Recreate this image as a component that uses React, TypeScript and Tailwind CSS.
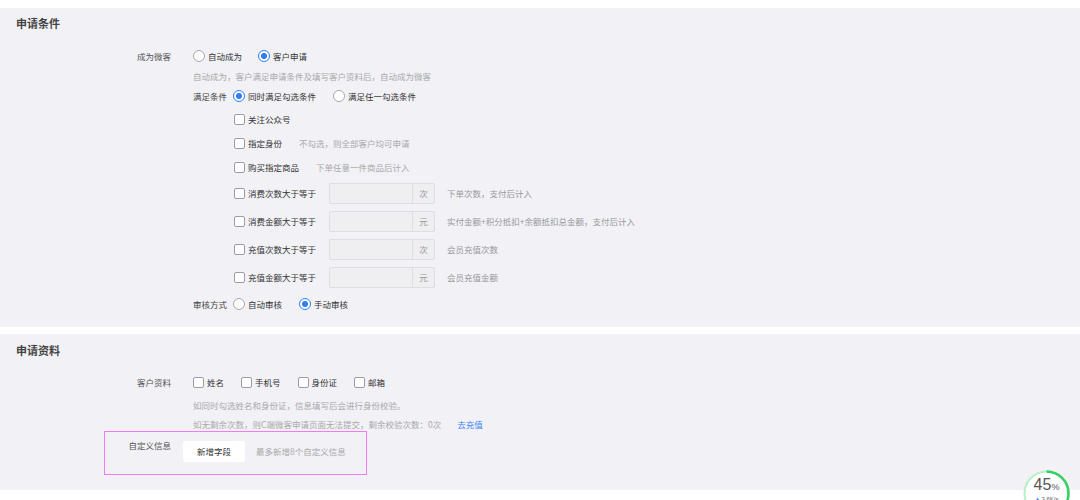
import React from "react";

const F = { fontFamily: '"Noto Sans CJK SC", "Noto Sans", sans-serif' };

function Radio({ checked, label, className = "" }: { checked?: boolean; label: string; className?: string }) {
  return (
    <div className={"flex items-center " + className}>
      {checked ? (
        <span className="w-[12px] h-[12px] rounded-full border border-[#2e7ef6] bg-white flex items-center justify-center">
          <span className="w-[6px] h-[6px] rounded-full bg-[#2e7ef6]" />
        </span>
      ) : (
        <span className="w-[12px] h-[12px] rounded-full border border-[#a9a9b0] bg-white" />
      )}
      <span className="ml-[3px] text-[8.5px] text-[#333]">{label}</span>
    </div>
  );
}

function Box() {
  return <span className="w-[11px] h-[11px] rounded-[2px] border border-[#9c9ca6] bg-white shrink-0" />;
}

function Check({ label, className = "" }: { label: string; className?: string }) {
  return (
    <div className={"flex items-center " + className}>
      <Box />
      <span className="ml-[3px] text-[8.5px] text-[#333]">{label}</span>
    </div>
  );
}

function InputRow({ label, unit, hint }: { label: string; unit: string; hint: string }) {
  return (
    <div className="h-[28px] flex items-center ml-[234px]">
      <div className="w-[95px] flex items-center">
        <Box />
        <span className="ml-[3px] text-[8.5px] text-[#333]">{label}</span>
      </div>
      <div className="w-[106px] h-[21px] flex border border-[#dedee2] rounded-[2px] bg-[#efeff1]">
        <div className="flex-1" />
        <div className="w-[22px] border-l border-[#dedee2] flex items-center justify-center text-[8.5px] text-[#999]">
          {unit}
        </div>
      </div>
      <span className="ml-[12px] text-[8.5px] text-[#999]">{hint}</span>
    </div>
  );
}

export default function App() {
  return (
    <div className="w-[1080px] h-[500px] bg-white overflow-hidden relative" style={F}>
      <div className="h-[8px] bg-white" />
      {/* Panel 1 */}
      <div className="h-[319px] bg-[#f1f1f6]">
        <div className="h-[30px] flex items-center pl-[16px] text-[11px] font-bold text-[#444]">申请条件</div>
        <div className="h-[8px]" />
        <div className="h-[20px] flex items-center">
          <div className="w-[171px] text-right text-[8.5px] text-[#555]">成为微客</div>
          <Radio label="自动成为" className="ml-[22px]" />
          <Radio checked label="客户申请" className="ml-[16px]" />
        </div>
        <div className="h-[20px] flex items-center pl-[193px] text-[8.5px] text-[#aaa]">
          自动成为，客户满足申请条件及填写客户资料后，自动成为微客
        </div>
        <div className="h-[20px] flex items-center pl-[193px]">
          <span className="text-[8.5px] text-[#444]">满足条件</span>
          <Radio checked label="同时满足勾选条件" className="ml-[6px]" />
          <Radio label="满足任一勾选条件" className="ml-[17px]" />
        </div>
        <div className="h-[1px]" />
        <div className="h-[24px] flex items-center ml-[234px]">
          <Check label="关注公众号" />
        </div>
        <div className="h-[24px] flex items-center ml-[234px]">
          <Check label="指定身份" />
          <span className="ml-[17px] text-[8.5px] text-[#aaa]">不勾选，则全部客户均可申请</span>
        </div>
        <div className="h-[24px] flex items-center ml-[234px]">
          <Check label="购买指定商品" />
          <span className="ml-[17px] text-[8.5px] text-[#aaa]">下单任意一件商品后计入</span>
        </div>
        <InputRow label="消费次数大于等于" unit="次" hint="下单次数，支付后计入" />
        <InputRow label="消费金额大于等于" unit="元" hint="实付金额+积分抵扣+余额抵扣总金额，支付后计入" />
        <InputRow label="充值次数大于等于" unit="次" hint="会员充值次数" />
        <InputRow label="充值金额大于等于" unit="元" hint="会员充值金额" />
        <div className="h-[26px] flex items-center pl-[193px]">
          <span className="text-[8.5px] text-[#444]">审核方式</span>
          <Radio label="自动审核" className="ml-[6px]" />
          <Radio checked label="手动审核" className="ml-[17px]" />
        </div>
      </div>
      <div className="h-[7px] bg-white" />
      {/* Panel 2 */}
      <div className="h-[156px] bg-[#f1f1f6]">
        <div className="h-[32px] flex items-center pl-[16px] text-[11px] font-bold text-[#444]">申请资料</div>
        <div className="h-[6px]" />
        <div className="h-[20px] flex items-center">
          <div className="w-[171px] text-right text-[8.5px] text-[#555]">客户资料</div>
          <Check label="姓名" className="ml-[22px]" />
          <Check label="手机号" className="ml-[17px]" />
          <Check label="身份证" className="ml-[17px]" />
          <Check label="邮箱" className="ml-[17px]" />
        </div>
        <div className="h-[3px]" />
        <div className="h-[20px] flex items-center pl-[193px] text-[8.5px] text-[#aaa]">
          如同时勾选姓名和身份证，信息填写后会进行身份校验。
        </div>
        <div className="h-[18px] flex items-center pl-[193px] text-[8.5px] text-[#aaa]">
          <span>如无剩余次数，则C端微客申请页面无法提交，剩余校验次数：0次</span>
          <span className="ml-[16px] text-[#3b86f5]">去充值</span>
        </div>
        <div className="-mt-[2px] ml-[104px] w-[263px] h-[44px] border border-[#f07cf0] flex items-start">
          <div className="w-[66px] pt-[7px] text-right text-[8.5px] text-[#555] leading-[12px]">自定义信息</div>
          <div className="ml-[12px] mt-[9px] w-[62px] h-[21px] bg-white rounded-[2px] flex items-center justify-center text-[8.5px] text-[#333]">
            新增字段
          </div>
          <div className="ml-[11px] mt-[9px] h-[21px] flex items-center text-[8.5px] text-[#aaa]">最多新增8个自定义信息</div>
        </div>
      </div>
      {/* floating progress widget */}
      <div className="absolute left-[1023px] top-[470px] w-[47px] h-[47px]">
        <svg width="47" height="47" viewBox="0 0 47 47" className="absolute inset-0">
          <circle cx="23.5" cy="23.5" r="22" fill="white" stroke="#b9efc6" strokeWidth="2" />
          <circle
            cx="23.5"
            cy="23.5"
            r="22"
            fill="none"
            stroke="#35d163"
            strokeWidth="2.5"
            strokeDasharray={`${2 * Math.PI * 22 * 0.45} ${2 * Math.PI * 22}`}
            transform="rotate(-90 23.5 23.5)"
          />
        </svg>
        <div className="absolute left-0 right-0 top-[7px] flex justify-center items-baseline text-[#555]" style={{ fontFamily: '"Liberation Sans", Arial, sans-serif' }}>
          <span className="text-[16px] leading-[16px]">45</span>
          <span className="text-[9px]">%</span>
        </div>
        <div className="absolute left-0 right-0 top-[25px] flex justify-center text-[6px] text-[#666]" style={{ fontFamily: '"Liberation Sans", Arial, sans-serif' }}>
          <span className="text-[#2e7ef6]">▲</span>
          <span className="ml-[1px]">3.6K/s</span>
        </div>
      </div>
    </div>
  );
}
